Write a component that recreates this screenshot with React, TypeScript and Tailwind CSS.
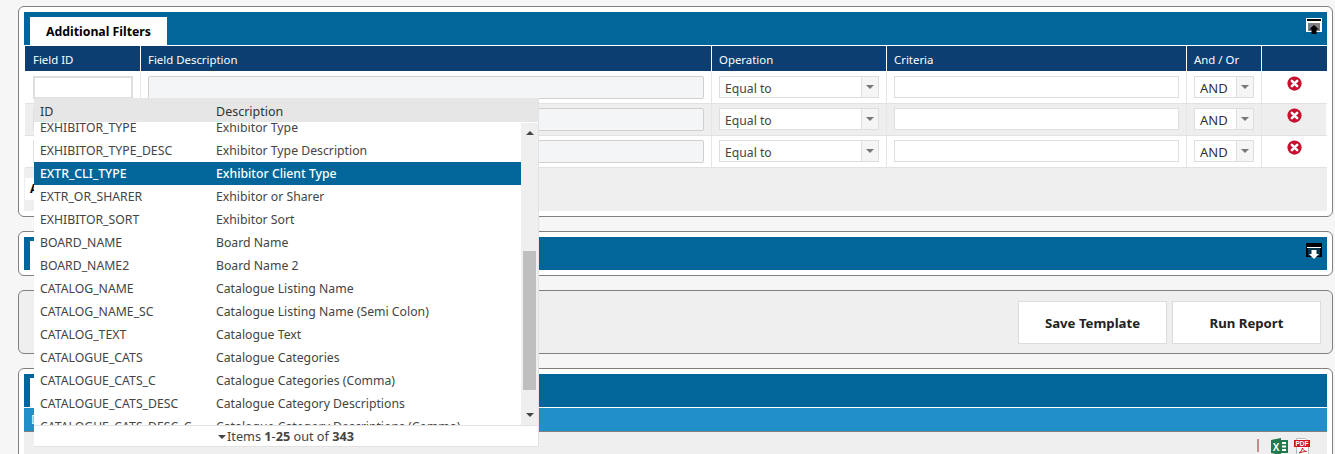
const rows: [string, string][] = [
  ['EXHIBITOR_TYPE', 'Exhibitor Type'],
  ['EXHIBITOR_TYPE_DESC', 'Exhibitor Type Description'],
  ['EXTR_CLI_TYPE', 'Exhibitor Client Type'],
  ['EXTR_OR_SHARER', 'Exhibitor or Sharer'],
  ['EXHIBITOR_SORT', 'Exhibitor Sort'],
  ['BOARD_NAME', 'Board Name'],
  ['BOARD_NAME2', 'Board Name 2'],
  ['CATALOG_NAME', 'Catalogue Listing Name'],
  ['CATALOG_NAME_SC', 'Catalogue Listing Name (Semi Colon)'],
  ['CATALOG_TEXT', 'Catalogue Text'],
  ['CATALOGUE_CATS', 'Catalogue Categories'],
  ['CATALOGUE_CATS_C', 'Catalogue Categories (Comma)'],
  ['CATALOGUE_CATS_DESC', 'Catalogue Category Descriptions'],
  ['CATALOGUE_CATS_DESC_C', 'Catalogue Category Descriptions (Comma)'],
]

function Caret() {
  return <span className="w-0 h-0 border-x-[4px] border-x-transparent border-t-[4px] border-t-[#777]" />
}

function RemoveIcon() {
  return (
    <svg width="15" height="15" viewBox="0 0 16 16" className="block">
      <circle cx="8" cy="8" r="7.6" fill="#c8102e" />
      <path d="M5.200 5.200l5.600 5.600M10.800 5.200l-5.600 5.600" stroke="#fff" strokeWidth="2.800" strokeLinecap="round" />
    </svg>
  )
}

function PanelIcon({ down }: { down?: boolean }) {
  return (
    <svg width="16" height="17" viewBox="0 0 16 17" className="block">
      <rect x="0.500" y="0.500" width="15" height="13" fill={down ? '#000' : '#fff'} stroke={down ? '#000' : '#fff'} />
      <rect x="1" y={down ? 4 : 1} width="14" height={down ? 1 : 2} fill={down ? '#fff' : '#000'} />
      <path d="M2 6h12M2 8h12M2 10h12M2 12h12" stroke={down ? '#0c6a9c' : '#000'} strokeWidth="1" />
      {down ? (
        <path d="M5.500 7h5v4H13l-5 5-5-5h2.500z" fill="#fff" />
      ) : (
        <path d="M8 7l5 4.500h-2.500V16h-5v-4.500H3z" fill="#000" />
      )}
    </svg>
  )
}

function FilterRow({ shaded }: { shaded?: boolean }) {
  const bg = shaded ? 'bg-[#eeeeee]' : 'bg-white'
  const cell = `${bg} h-[31px] flex items-start pt-[4px]`
  return (
    <div className="grid grid-cols-[116px_571px_175px_300px_75px_64px] border-b border-[#e2e2e2]">
      <div className={`${cell} pl-[8px] border-r border-[#e6e6e6]`}>
        <div className="w-[100px] h-[23px] bg-white border-2 border-[#dedede]" />
      </div>
      <div className={`${cell} pl-[7px] border-r border-[#e6e6e6]`}>
        <div className="w-[556px] h-[23px] bg-[#f4f5f7] border border-[#d0d0d0] rounded-[2px]" />
      </div>
      <div className={`${cell} pl-[7px] border-r border-[#e6e6e6]`}>
        <div className="w-[160px] h-[22px] bg-white border border-[#dedede] flex">
          <span className="flex-1 pl-[5px] text-[12.200px] leading-[23px] text-[#444]">Equal to</span>
          <span className="w-[17px] bg-[#f5f5f5] border-l border-[#dedede] flex items-center justify-center"><Caret /></span>
        </div>
      </div>
      <div className={`${cell} pl-[7px] border-r border-[#e6e6e6]`}>
        <div className="w-[285px] h-[22px] bg-white border border-[#dedede]" />
      </div>
      <div className={`${cell} pl-[7px] border-r border-[#e6e6e6]`}>
        <div className="w-[60px] h-[22px] bg-white border border-[#dedede] flex">
          <span className="flex-1 pl-[5px] text-[13px] leading-[23px] text-[#333]">AND</span>
          <span className="w-[17px] bg-[#f5f5f5] border-l border-[#dedede] flex items-center justify-center"><Caret /></span>
        </div>
      </div>
      <div className={`${cell} justify-center`}>
        <RemoveIcon />
      </div>
    </div>
  )
}

function Dropdown() {
  return (
    <div className="absolute left-[34px] top-[98px] w-[505px] h-[349px] bg-white border-r border-b border-[#e2e2e2] flex flex-col z-10 text-[12.250px] text-[#444]">
      <div className="h-[25px] bg-[#e6e6e6] flex items-center pt-[5px] text-[12.500px] text-[#333] shrink-0 border-b border-white">
        <span className="w-[182px] pl-[6px]">ID</span>
        <span>Description</span>
      </div>
      <div className="flex-1 flex min-h-0 border-b border-[#e2e2e2]">
        <div className="flex-1 overflow-hidden">
          <div className="-mt-[7px]">
            {rows.map(([id, desc]) => {
              const selected = id === 'EXTR_CLI_TYPE'
              return (
                <div key={id} className={`h-[23px] pt-[2px] flex items-center whitespace-nowrap ${selected ? 'bg-[#02669a] text-white font-medium' : ''}`}>
                  <span className="w-[182px] pl-[6px]">{id}</span>
                  <span>{desc}</span>
                </div>
              )
            })}
          </div>
        </div>
        <div className="w-[17px] bg-[#efefef] flex flex-col items-center justify-between py-[8px] relative">
          <span className="w-0 h-0 border-x-[4px] border-x-transparent border-b-[4px] border-b-[#444]" />
          <div className="absolute left-[2px] top-[128px] w-[13px] h-[139px] bg-[#bfbfbf]" />
          <span className="w-0 h-0 border-x-[4px] border-x-transparent border-t-[4px] border-t-[#444]" />
        </div>
      </div>
      <div className="h-[20px] pt-[2px] flex items-center justify-center shrink-0 text-[12.700px] text-[#444]">
        <span className="w-0 h-0 border-x-[4px] border-x-transparent border-t-[4px] border-t-[#444] mr-[1px]" />
        <span>Items <b>1</b>-<b>25</b> out of <b>343</b></span>
      </div>
    </div>
  )
}

function ExcelIcon() {
  return (
    <svg width="17" height="17" viewBox="0 0 17 17" className="block">
      <rect x="7" y="2" width="10" height="13" fill="#1f7a4d" />
      <path d="M11 4h4v2h-4zM11 7.500h4v2h-4zM11 11h4v2h-4z" fill="#fff" />
      <path d="M0 2l10-2v17L0 15z" fill="#1f7a4d" />
      <text x="5" y="12.500" textAnchor="middle" fontSize="10" fontWeight="700" fill="#fff" fontFamily="Liberation Sans, sans-serif">X</text>
    </svg>
  )
}

function PdfIcon() {
  return (
    <svg width="17" height="18" viewBox="0 0 17 18" className="block">
      <path d="M2.500 0.500h9l3 3v14h-12z" fill="#fff" stroke="#bbb" />
      <rect x="0" y="2" width="16" height="7" fill="#d0121b" />
      <text x="8" y="8" textAnchor="middle" fontSize="6.500" fontWeight="700" fill="#fff" fontFamily="Liberation Sans, sans-serif">PDF</text>
      <path d="M5 15c2-1 3-3 3.500-5 .5 2 2 3.500 4 3.500-2.500 0-5 .5-7.500 1.500z" fill="none" stroke="#d0121b" />
    </svg>
  )
}

export default function App() {
  return (
    <div className="relative w-[1335px] h-[454px] overflow-hidden bg-[#f6f6f6] font-['Noto_Sans','Open_Sans',sans-serif] pt-[6px] pl-[18px]">
      <div className="w-[1315px] flex flex-col gap-[14px]">
        <section className="h-[211px] bg-white border border-[#808080] rounded-[6px] p-[5px]">
          <div className="h-[33px] bg-[#02669a] flex justify-between pl-[6px] pr-[5px]">
            <div className="mt-[5px] w-[137px] h-[28px] bg-white flex items-center justify-center pt-[2px] text-[12.300px] font-bold text-black">Additional Filters</div>
            <div className="mt-[6px]"><PanelIcon /></div>
          </div>
          <div className="ml-[1px] grid grid-cols-[116px_571px_175px_300px_75px_64px] mt-[1px] h-[26px] bg-[#0c3e72] text-white text-[11.400px] leading-[27px] border-b border-white">
            <div className="pl-[8px] border-r border-white">Field ID</div>
            <div className="pl-[7px] border-r border-white">Field Description</div>
            <div className="pl-[7px] border-r border-white">Operation</div>
            <div className="pl-[7px] border-r border-white">Criteria</div>
            <div className="pl-[7px] border-r border-white">And / Or</div>
            <div />
          </div>
          <div className="ml-[1px]">
            <FilterRow />
            <FilterRow shaded />
            <FilterRow />
          </div>
          <div className="h-[43px] bg-[#efefef] pt-[10px] pl-[1px]">
            <div className="w-[60px] h-[22px] bg-white flex items-center pl-[5px] text-[12px] font-bold text-black">A</div>
          </div>
        </section>

        <section className="h-[45px] bg-white border border-[#808080] rounded-[6px] p-[5px]">
          <div className="h-[33px] bg-[#02669a] flex justify-between items-end pl-[6px] pr-[5px]">
            <div className="w-[100px] h-[29px] bg-white" />
            <div className="mb-[10px]"><PanelIcon down /></div>
          </div>
        </section>

        <section className="h-[64px] bg-[#efefef] border border-[#808080] rounded-[6px] flex justify-end items-start gap-[5px] pt-[10px] pr-[11px]">
          <button className="w-[149px] h-[43px] pt-[3px] bg-white border border-[#dcdcdc] text-[13.200px] font-bold text-[#222]">Save Template</button>
          <button className="w-[149px] h-[43px] pt-[3px] bg-white border border-[#dcdcdc] text-[13.200px] font-bold text-[#222]">Run Report</button>
        </section>

        <section className="h-[90px] bg-white border border-[#808080] rounded-t-[6px] px-[5px] pt-[5px]">
          <div className="h-[33px] bg-[#02669a] flex items-end pl-[6px]">
            <div className="w-[100px] h-[29px] bg-white" />
          </div>
          <div className="mt-[1px] h-[24px] bg-[#2190c8] border-b border-[#808080] pl-[7px] text-[12px] leading-[23px] text-white">D</div>
          <div className="h-[26px] bg-[#efefef] flex justify-end items-start gap-[6px] pt-[6px] pr-[16px]">
            <span className="w-[2px] h-[13px] bg-[#c98a8a] mr-[6px] mt-[1px]" />
            <ExcelIcon />
            <PdfIcon />
          </div>
        </section>
      </div>
      <Dropdown />
    </div>
  )
}
